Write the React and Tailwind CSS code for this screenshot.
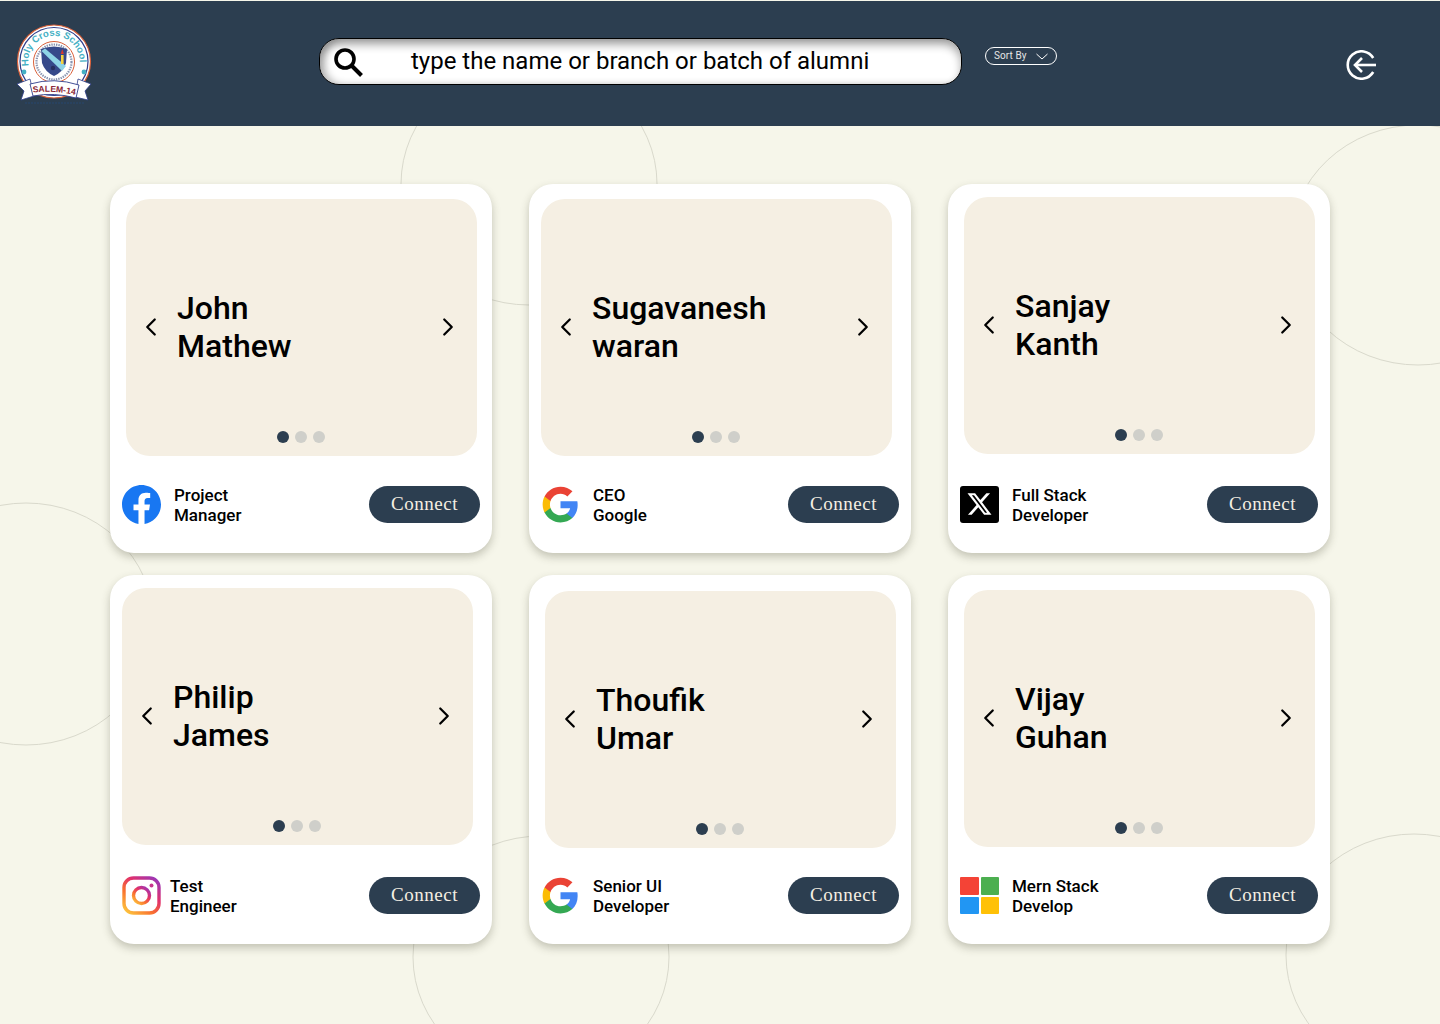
import React from "react";
import { ChevronLeft, ChevronRight } from "lucide-react";

function SchoolLogo() {
  return (
    <svg width="76" height="82" viewBox="0 0 76 82" className="shrink-0">
      <defs>
        <path id="crest-arc" d="M12.7 42 A25.7 25.7 0 1 1 63.3 42" fill="none" />
        <path id="salem-arc" d="M17 68.5 Q38 66 62 71.5" fill="none" />
      </defs>
      <circle cx="38" cy="37.5" r="36.5" fill="#fff" stroke="#d9603a" strokeWidth="1.2" />
      <circle cx="38" cy="37.5" r="34" fill="none" stroke="#2f3d8a" strokeWidth="1.2" />
      <text fontFamily="'Liberation Sans', sans-serif" fontSize="9.6" fontWeight="700" fill="#45b0c4">
        <textPath href="#crest-arc" textLength="86" lengthAdjust="spacing">
          Holy Cross School
        </textPath>
      </text>
      <circle cx="38" cy="38" r="20.5" fill="#fff" stroke="#d9603a" strokeWidth="1" />
      <circle cx="38" cy="38" r="17.5" fill="none" stroke="#8a94b0" strokeWidth="2.2" strokeDasharray="1.4 1" />
      <path d="M25 25 Q38 20 51 25 L50 39 Q47 48 38 52 Q29 48 26 39 Z" fill="#36498a" />
      <path d="M25.5 27 L29 24.5 L50 42 L46 47 Z" fill="#8ed4e6" />
      <path d="M45 31 h2.6 v9 h-2.6 Z" fill="#f5d33e" />
      <path d="M46.3 25 l1.6 5 h-3.2 Z" fill="#d63b2f" />
      <circle cx="37" cy="44" r="2.2" fill="#27305f" />
      <circle cx="8" cy="48" r="2.4" fill="#45b0c4" />
      <circle cx="68" cy="48" r="2.4" fill="#45b0c4" />
      <path d="M1 60 L14 55 L18 72 L5 76 L8 67 Z" fill="#fff" stroke="#2f3d8a" strokeWidth="0.8" />
      <path d="M75 60 L62 55 L59 73 L72 76 L69 67 Z" fill="#fff" stroke="#2f3d8a" strokeWidth="0.8" />
      <path d="M14 60 Q38 53 63 61 L60 74 Q38 68 17 72 Z" fill="#fff" stroke="#2f3d8a" strokeWidth="0.9" />
      <text fontFamily="'Liberation Sans', sans-serif" fontSize="8.6" fontWeight="700" fill="#8a1f35">
        <textPath href="#salem-arc">SALEM-14</textPath>
      </text>
      <path d="M9 79 H68" stroke="#27466e" strokeWidth="1" strokeDasharray="2 1" />
    </svg>
  );
}

function SearchGlyph() {
  return (
    <svg width="30" height="30" viewBox="0 0 30 30" fill="none" stroke="#000" className="shrink-0">
      <circle cx="12" cy="12" r="9" strokeWidth="3.6" />
      <path d="M18.5 18.5 L28.5 28.5" strokeWidth="4" />
    </svg>
  );
}

function LogoutGlyph() {
  return (
    <svg width="30" height="30" viewBox="0 0 30 30" fill="none" stroke="#fff" strokeWidth="2.6">
      <path d="M27.2 8 A13.7 13.7 0 1 0 27.2 22" />
      <path d="M30 15 H9" />
      <path d="M16 8 L9 15 L16 22" />
    </svg>
  );
}

function SortChevron() {
  return (
    <svg width="12" height="7" viewBox="0 0 12 7" fill="none" stroke="#fff" strokeWidth="1" className="ml-[9px]">
      <path d="M0.5 1 L6 6 L11.5 1" />
    </svg>
  );
}

function FacebookIcon() {
  return (
    <svg width="39" height="39" viewBox="0 0 24 24">
      <circle cx="12" cy="12" r="12" fill="#fff" />
      <path
        fill="#1877f2"
        d="M24 12.073c0-6.627-5.373-12-12-12s-12 5.373-12 12c0 5.99 4.388 10.954 10.125 11.854v-8.385H7.078v-3.47h3.047V9.43c0-3.007 1.792-4.669 4.533-4.669 1.312 0 2.686.235 2.686.235v2.953H15.83c-1.491 0-1.956.925-1.956 1.874v2.25h3.328l-.532 3.47h-2.796v8.385C19.612 23.027 24 18.062 24 12.073z"
      />
    </svg>
  );
}

function GoogleIcon() {
  return (
    <svg width="39" height="39" viewBox="0 0 24 24">
      <path fill="#4285f4" d="M22.56 12.25c0-.78-.07-1.53-.2-2.25H12v4.26h5.92c-.26 1.37-1.04 2.53-2.21 3.31v2.77h3.57c2.08-1.92 3.28-4.74 3.28-8.09z" />
      <path fill="#34a853" d="M12 23c2.97 0 5.46-.98 7.28-2.66l-3.57-2.77c-.98.66-2.23 1.06-3.71 1.06-2.86 0-5.29-1.93-6.16-4.53H2.18v2.84C3.99 20.53 7.7 23 12 23z" />
      <path fill="#fbbc05" d="M5.84 14.09c-.22-.66-.35-1.36-.35-2.09s.13-1.43.35-2.09V7.07H2.18C1.43 8.55 1 10.22 1 12s.43 3.45 1.18 4.93l2.85-2.22.81-.62z" />
      <path fill="#ea4335" d="M12 5.38c1.62 0 3.06.56 4.21 1.64l3.15-3.15C17.45 2.09 14.97 1 12 1 7.7 1 3.99 3.47 2.18 7.07l3.66 2.84c.87-2.6 3.3-4.53 6.16-4.53z" />
    </svg>
  );
}

function XIcon() {
  return (
    <svg width="39" height="39" viewBox="0 0 39 39">
      <rect width="39" height="37" y="1" rx="3" fill="#000" />
      <g transform="translate(7.5 7)">
        <path
          fill="#fff"
          d="M18.901 1.153h3.68l-8.04 9.19L24 22.846h-7.406l-5.8-7.584-6.638 7.584H.474l8.6-9.83L0 1.154h7.594l5.243 6.932ZM17.61 20.644h2.039L6.486 3.24H4.298Z"
        />
      </g>
    </svg>
  );
}

function InstagramIcon() {
  return (
    <svg width="39" height="39" viewBox="0 0 39 39" fill="none">
      <defs>
        <linearGradient id="insta" x1="0.1" y1="1" x2="0.9" y2="0">
          <stop offset="0" stopColor="#fdc23d" />
          <stop offset="0.35" stopColor="#f9702f" />
          <stop offset="0.65" stopColor="#e1306c" />
          <stop offset="1" stopColor="#9b36b7" />
        </linearGradient>
      </defs>
      <rect x="2" y="2" width="35" height="35" rx="9.5" stroke="url(#insta)" strokeWidth="3.4" />
      <circle cx="19.5" cy="19.5" r="8" stroke="url(#insta)" strokeWidth="3.4" />
      <circle cx="29.5" cy="9.5" r="2" fill="#c9358f" />
    </svg>
  );
}

function MicrosoftIcon() {
  return (
    <div className="grid h-[37px] w-[39px] grid-cols-2 gap-[2px]">
      <div className="rounded-[1px] bg-[#f44336]" />
      <div className="rounded-[1px] bg-[#4caf50]" />
      <div className="rounded-[1px] bg-[#2196f3]" />
      <div className="rounded-[1px] bg-[#ffc107]" />
    </div>
  );
}

const alumni = [
  { first: "John", last: "Mathew", role: ["Project", "Manager"], Icon: FacebookIcon, top: "pt-[15px]", left: "ml-[4px]", gap: "w-[13px]" },
  { first: "Sugavanesh", last: "waran", role: ["CEO", "Google"], Icon: GoogleIcon, top: "pt-[15px]", left: "ml-0", gap: "w-[13px]" },
  { first: "Sanjay", last: "Kanth", role: ["Full Stack", "Developer"], Icon: XIcon, top: "pt-[13px]", left: "ml-[4px]", gap: "w-[13px]" },
  { first: "Philip", last: "James", role: ["Test", "Engineer"], Icon: InstagramIcon, top: "pt-[13px]", left: "ml-0", gap: "w-[9px]" },
  { first: "Thoufik", last: "Umar", role: ["Senior UI", "Developer"], Icon: GoogleIcon, top: "pt-[16px]", left: "ml-[4px]", gap: "w-[13px]" },
  { first: "Vijay", last: "Guhan", role: ["Mern Stack", "Develop"], Icon: MicrosoftIcon, top: "pt-[15px]", left: "ml-[4px]", gap: "w-[13px]" },
];

function AlumniCard({ person }) {
  const { Icon } = person;
  return (
    <div className={`flex h-[369px] w-[382px] flex-col rounded-[24px] bg-white px-[12px] shadow-[0_4px_9px_rgba(60,60,40,0.28)] ${person.top}`}>
      <div className={`relative flex h-[257px] w-[351px] items-center rounded-[24px] bg-[#f5efe3] ${person.left}`}>
        <ChevronLeft size={30} strokeWidth={1.8} color="#000" className="mb-px ml-[10px] shrink-0" />
        <div className="mb-[2px] ml-[11px] flex-1 text-[32px] font-medium leading-[38px] text-black">
          <div>{person.first}</div>
          <div>{person.last}</div>
        </div>
        <ChevronRight size={30} strokeWidth={1.8} color="#000" className="mb-px mr-[14px] shrink-0" />
        <div className="absolute bottom-[13px] left-0 right-0 flex justify-center gap-[6px] pr-[2px]">
          <span className="h-3 w-3 rounded-full bg-[#2c3e50]" />
          <span className="h-3 w-3 rounded-full bg-[#cfcfca]" />
          <span className="h-3 w-3 rounded-full bg-[#cfcfca]" />
        </div>
      </div>
      <div className="mb-[30px] mt-auto flex h-[37px] items-center">
        <Icon />
        <div className={`shrink-0 ${person.gap}`} />
        <div className="text-[17px] font-medium leading-[20px] text-black">
          <div>{person.role[0]}</div>
          <div>{person.role[1]}</div>
        </div>
        <button className="ml-auto h-[37px] w-[111px] rounded-full bg-[#2c3e50] pb-[2px] font-['Liberation_Serif',serif] text-[19px] leading-none tracking-[0.55px] text-[#f5efe3]">
          Connect
        </button>
      </div>
    </div>
  );
}

export default function App() {
  return (
    <div className="relative h-[1024px] w-[1440px] overflow-hidden bg-[#f6f6ea] font-['Roboto',sans-serif]">
      <svg width="1440" height="1024" fill="none" stroke="#d9d9cc" strokeWidth="1" className="absolute inset-0">
        <ellipse cx="529" cy="184" rx="128" ry="121" />
        <ellipse cx="1418" cy="245" rx="128" ry="120" />
        <ellipse cx="26" cy="624" rx="128" ry="121" />
        <ellipse cx="541" cy="957" rx="128" ry="121" />
        <ellipse cx="1414" cy="955" rx="128" ry="121" />
      </svg>

      <header className="relative mt-px flex h-[125px] items-start bg-[#2c3e50]">
        <div className="ml-[16px] mt-[23px]">
          <SchoolLogo />
        </div>
        <div className="ml-[227px] mt-[37px] flex h-[47px] w-[643px] items-center rounded-[20px] border border-black bg-white pl-[13px] shadow-[inset_0_6px_8px_rgba(0,0,0,0.32),inset_6px_0_7px_rgba(0,0,0,0.2)]">
          <SearchGlyph />
          <span className="mb-px ml-[48px] text-2xl leading-none text-black">type the name or branch or batch of alumni</span>
        </div>
        <button className="ml-[23px] mt-[46px] flex h-[18px] w-[72px] items-center rounded-full border border-white pl-2 text-[10px] leading-none tracking-[0.1px] text-[#e5e5e5]">
          Sort By
          <SortChevron />
        </button>
        <div className="ml-[289px] mt-[49px]">
          <LogoutGlyph />
        </div>
      </header>

      <main className="relative ml-[110px] mt-[58px] grid w-[1220px] grid-cols-[382px_382px_382px] gap-x-[37px] gap-y-[22px]">
        {alumni.map((person) => (
          <AlumniCard key={person.first} person={person} />
        ))}
      </main>
    </div>
  );
}
